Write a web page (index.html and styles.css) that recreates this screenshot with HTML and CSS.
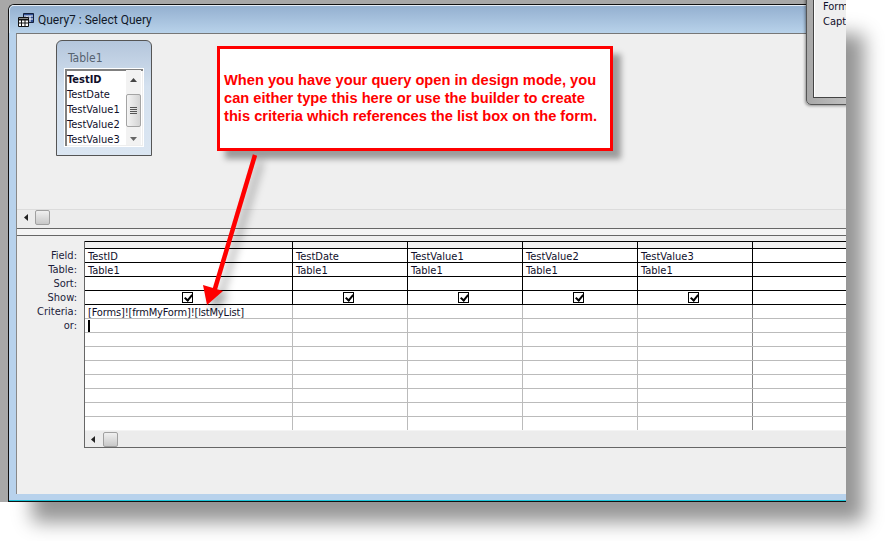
FILE: index.html
```html
<!DOCTYPE html>
<html lang="en">
<head>
<meta charset="utf-8">
<title>Query7 : Select Query</title>
<link rel="stylesheet" href="styles.css">
</head>
<body>
<div class="backdrop">
  <div class="window">
    <header class="titlebar">
      <svg class="app-icon" width="16" height="14" viewBox="0 0 16 14"><path d="M5.500.5h10v9h-10z" fill="#2f4f94" stroke="#14203c"/><path d="M6 3h9M9 3v6M12 3v6M6 6h9" stroke="#fff" fill="none"/><path d="M.5 4.500h10v9H.5z" fill="#fff" stroke="#111"/><path d="M.5 6.500h10" stroke="#111" stroke-width="2"/><path d="M3.500 7v6M7 7v6M1 10h9" stroke="#111" fill="none"/></svg>
      <span class="title">Query7 : Select Query</span>
    </header>
    <main class="client">
      <section class="upper">
        <div class="canvas">
          <div class="fieldlist">
            <div class="fieldlist-title">Table1</div>
            <div class="listbox">
              <ul class="fields">
                <li class="pk">TestID</li>
                <li>TestDate</li>
                <li>TestValue1</li>
                <li>TestValue2</li>
                <li>TestValue3</li>
              </ul>
              <div class="vscroll">
                <svg class="arrow" width="7" height="4" viewBox="0 0 7 4"><path d="M3.500 0L7 4H0z" fill="#444"/></svg>
                <div class="vthumb"><span></span><span></span><span></span><span></span></div>
                <svg class="arrow" width="7" height="4" viewBox="0 0 7 4"><path d="M0 0h7L3.500 4z" fill="#666"/></svg>
              </div>
            </div>
          </div>
        </div>
        <div class="hscroll hscroll-upper">
          <svg class="arrow-left" width="4" height="7" viewBox="0 0 4 7"><path d="M4 0v7L0 3.500z" fill="#222"/></svg>
          <div class="hthumb"></div>
        </div>
      </section>
      <div class="splitter"></div>
      <section class="lower">
        <div class="labels">
          <div>Field:</div>
          <div>Table:</div>
          <div>Sort:</div>
          <div>Show:</div>
          <div>Criteria:</div>
          <div>or:</div>
        </div>
        <div class="qbe">
          <div class="row head"><i></i><i></i><i></i><i></i><i></i><i></i></div>
          <div class="row"><i>TestID</i><i>TestDate</i><i>TestValue1</i><i>TestValue2</i><i>TestValue3</i><i></i></div>
          <div class="row"><i>Table1</i><i>Table1</i><i>Table1</i><i>Table1</i><i>Table1</i><i></i></div>
          <div class="row"><i></i><i></i><i></i><i></i><i></i><i></i></div>
          <div class="row show">
            <i><b class="check on"></b></i><i><b class="check on"></b></i><i><b class="check on"></b></i><i><b class="check on"></b></i><i><b class="check on"></b></i><i><b class="check"></b></i>
          </div>
          <div class="row soft first"><i class="criteria">[Forms]![frmMyForm]![lstMyList]</i><i></i><i></i><i></i><i></i><i></i></div>
          <div class="row soft"><i><span class="caret"></span></i><i></i><i></i><i></i><i></i><i></i></div>
          <div class="row soft"><i></i><i></i><i></i><i></i><i></i><i></i></div>
          <div class="row soft"><i></i><i></i><i></i><i></i><i></i><i></i></div>
          <div class="row soft"><i></i><i></i><i></i><i></i><i></i><i></i></div>
          <div class="row soft"><i></i><i></i><i></i><i></i><i></i><i></i></div>
          <div class="row soft"><i></i><i></i><i></i><i></i><i></i><i></i></div>
          <div class="row soft"><i></i><i></i><i></i><i></i><i></i><i></i></div>
          <div class="row soft"><i></i><i></i><i></i><i></i><i></i><i></i></div>
          <div class="hscroll hscroll-grid">
            <svg class="arrow-left" width="4" height="7" viewBox="0 0 4 7"><path d="M4 0v7L0 3.500z" fill="#222"/></svg>
            <div class="hthumb"></div>
          </div>
        </div>
      </section>
    </main>
    <div class="bottom-edge"></div>
  </div>

  <aside class="dialog">
    <div class="dialog-inner">
      <div>Form</div>
      <div>Capt</div>
    </div>
  </aside>

  <div class="callout">When you have your query open in design mode, you can either type this here or use the builder to create this criteria which references the list box on the form.</div>
  <svg class="pointer" width="70" height="160" viewBox="0 0 70 160">
    <path d="M49 3 L8 140" stroke="#f00" stroke-width="4.500" fill="none"/>
    <path d="M-3 133 L17 139 L1 153z" fill="#f00"/>
  </svg>
</div>
</body>
</html>
```
FILE: styles.css
```css
* { box-sizing: border-box; }
html, body { margin: 0; padding: 0; }
body {
  width: 885px;
  height: 541px;
  overflow: hidden;
  background: #fff;
  font: 11px/14px "DejaVu Sans Condensed", "Liberation Sans", sans-serif;
  color: #10102a;
}
.backdrop {
  position: relative;
  width: 846px;
  height: 502px;
  padding: 4px 0 0 8px;
  background: #a8a8a8;
  box-shadow: 25px 27px 18px -7px rgba(0, 0, 0, .42);
  overflow: clip;
}
.window {
  width: 860px;
  height: 498px;
  display: flex;
  flex-direction: column;
  border: 1px solid #111;
  border-right: 0;
  border-radius: 6px 0 0 0;
  background: #b8d2ec;
}
.titlebar {
  height: 28px;
  flex: none;
  display: flex;
  align-items: center;
  gap: 4px;
  padding: 1px 0 0 8px;
  background: linear-gradient(#94b0d0, #b8d2ea);
  border-top: 1px solid #e8eef6;
  border-left: 1px solid #dce8f4;
  border-radius: 5px 0 0 0;
}
.app-icon { flex: none; }
.title {
  font: 12px/16px Roboto, "Noto Sans", sans-serif;
  color: #101828;
}
.client {
  height: 461px;
  flex: none;
  margin: 0 0 0 7px;
  display: flex;
  flex-direction: column;
  background: #efefef;
  border-top: 1px solid #777;
  border-left: 1px solid #888;
}
.upper {
  height: 194px;
  flex: none;
  display: flex;
  flex-direction: column;
}
.canvas {
  flex: 1;
  padding: 6px 0 0 39px;
}
.fieldlist {
  width: 96px;
  height: 116px;
  padding: 0 7px;
  background: linear-gradient(#b4c6dc, #d4e1ef 40%, #dbe6f2);
  border: 1px solid #555;
  border-radius: 6px 6px 0 0;
}
.fieldlist-title {
  height: 27px;
  padding: 10px 0 0 4px;
  font-size: 12px;
  line-height: 14px;
  color: #566270;
}
.listbox {
  width: 80px;
  height: 79px;
  display: flex;
  background: #fff;
  border: 1px solid #fff;
  box-shadow: inset 2px 2px 0 #808080, inset -1px -1px 0 #eee;
  padding: 1px 2px;
}
.fields {
  flex: 1;
  margin: 0;
  padding: 2px 0 0;
  list-style: none;
}
.fields li { height: 15px; line-height: 15px; white-space: nowrap; }
.fields .pk { font-weight: bold; }
.vscroll {
  width: 15px;
  flex: none;
  display: flex;
  flex-direction: column;
  align-items: center;
  background: #f2f2f2;
  padding: 8px 0 4px;
}
.arrow { flex: none; }
.vthumb {
  width: 15px;
  height: 33px;
  margin: 12px 0 auto;
  display: flex;
  flex-direction: column;
  justify-content: center;
  align-items: center;
  gap: 1px;
  background: linear-gradient(90deg, #f4f4f4, #d4d4d4);
  border: 1px solid #a4a4a4;
  border-radius: 2px;
}
.vthumb span { width: 7px; height: 1px; background: #555; }
.hscroll {
  display: flex;
  align-items: center;
  background: #ececec;
}
.hscroll-upper {
  height: 19px;
  flex: none;
  padding: 0 0 3px 7px;
  border-top: 1px solid #dcdcdc;
}
.hscroll-grid {
  height: 17px;
  padding-left: 6px;
  border-top: 1px solid #f4f4f4;
}
.arrow-left { flex: none; margin-right: 8px; }
.hscroll-upper .arrow-left { margin-right: 7px; }
.hthumb {
  width: 15px;
  height: 15px;
  background: linear-gradient(#f0f0f0, #c8c8c8);
  border: 1px solid #a0a0a0;
  border-radius: 2px;
}
.splitter {
  height: 8px;
  flex: none;
  background: #f4f4f4;
  border-top: 1px solid #666;
  border-bottom: 1px solid #666;
}
.lower {
  flex: 1;
  min-height: 0;
  display: flex;
  padding-top: 5px;
}
.labels {
  width: 67px;
  flex: none;
  padding: 8px 7px 0 0;
  text-align: right;
  color: #1c1c3a;
}
.labels div { height: 14px; line-height: 14px; }
.qbe {
  flex: 1;
  height: 207px;
  border-left: 1px solid #666;
  border-bottom: 1px solid #666;
}
.row {
  height: 14px;
  display: grid;
  grid-template-columns: 207px 115px 115px 115px 115px 200px;
  border-top: 1px solid #000;
  background: #fff;
}
.row.head { height: 7px; background: #f0f0f0; }
.row i {
  display: flex;
  align-items: center;
  min-width: 0;
  height: 13px;
  padding: 1px 0 0 3px;
  font-style: normal;
  white-space: nowrap;
  line-height: 13px;
}
.row i + i { border-left: 1px solid #000; }
.row.head i { height: 6px; }
.row.soft { border-top: 1px solid #bbb; }
.row.first { border-top-color: #000; }
.row.soft i + i { border-left-color: #bbb; }
.row.soft i:last-child { border-left-color: #888; }
.row.show i { justify-content: center; padding: 0 3px 0 0; }
.row .criteria { letter-spacing: -.16px; }
.check {
  display: block;
  position: relative;
  width: 11px;
  height: 11px;
  background: #fff;
  border: 1px solid #000;
}
.check.on::after {
  content: "";
  position: absolute;
  left: 3px;
  top: 0;
  width: 3px;
  height: 6px;
  border: solid #000;
  border-width: 0 2px 2px 0;
  transform: rotate(40deg);
}
.caret {
  display: block;
  width: 2px;
  height: 12px;
  background: #000;
}
.bottom-edge {
  height: 7px;
  flex: none;
  background: #b8d2ec;
  border-bottom: 1px solid #19c3d8;
}
.dialog {
  position: absolute;
  left: 806px;
  top: -20px;
  width: 80px;
  height: 125px;
  padding: 6px 0 6px 6px;
  background: linear-gradient(90deg, #a8a8a8, #c4c4c4 60%, #b0b0b0);
  border: 1px solid #555;
  border-radius: 0 0 0 5px;
  box-shadow: -1px 1px 3px rgba(0, 0, 0, .4);
}
.dialog-inner {
  height: 100%;
  padding: 11px 0 0 9px;
  background: #efefef;
  border: 1px solid #444;
  border-right: 0;
  box-shadow: inset 1px 1px 0 #fff;
  line-height: 15px;
  white-space: nowrap;
}
.callout {
  position: absolute;
  left: 217px;
  top: 46px;
  width: 396px;
  height: 105px;
  padding: 22px 12px 0 4px;
  background: #fff;
  border: 3px solid #f00;
  box-shadow: 8px 8px 6px rgba(0, 0, 0, .35);
  font: bold 14.67px/18px "Liberation Sans", Arial, sans-serif;
  color: #f00;
}
.pointer {
  position: absolute;
  left: 206px;
  top: 152px;
  overflow: visible;
  filter: drop-shadow(6px 6px 4px rgba(0, 0, 0, .35));
}
```
